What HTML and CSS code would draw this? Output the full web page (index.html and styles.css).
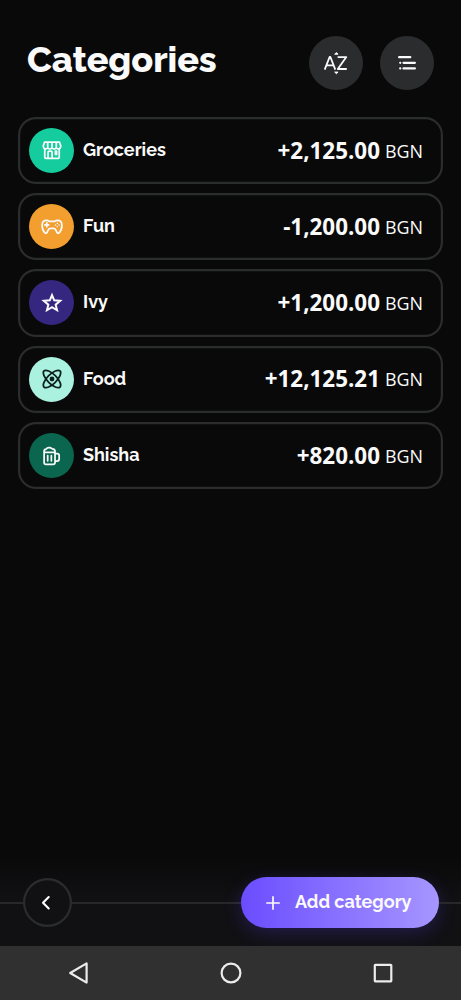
FILE: index.html
```html
<!DOCTYPE html>
<html lang="en">
<head>
<meta charset="utf-8">
<title>Categories</title>
<link rel="stylesheet" href="styles.css">
</head>
<body>
<div class="screen">
  <header class="header">
    <h1 class="title">Categories</h1>
    <button class="round-button" aria-label="Sort">
      <svg width="28" height="28" viewBox="0 0 28 28" fill="none" stroke="#fafafa" stroke-width="1.8" stroke-linejoin="round"><path d="M2.7 20.6 7.6 8h.8l4.9 12.6M4.4 16.4h7.2M15.6 8.1h8.7l-8.5 11.9h9"/><path d="m12.7 5.2 1.7-1.6 1.7 1.6zM12.7 23.1l1.7 1.6 1.7-1.6z" fill="#fafafa" stroke-width="1"/></svg>
    </button>
    <button class="round-button" aria-label="Reorder">
      <svg width="28" height="28" viewBox="0 0 28 28" fill="none" stroke="#fafafa" stroke-width="2.2" stroke-linecap="round"><path d="M6.1 8.2h11.2M10.5 13.8h11.4M10.5 19.4h11.4M7.2 13.8h.1M7.2 19.4h.1"/></svg>
    </button>
  </header>

  <main class="list">
    <article class="card">
      <span class="badge green"><svg class="icon" viewBox="0 0 24 24"><path d="M4.1 10.4V20a1.1 1.1 0 0 0 1.1 1.1h13.6a1.1 1.1 0 0 0 1.1-1.1v-9.6M3.9 3.3h16.2l1.4 4.2v1a2.5 2.5 0 0 1-4.8.8 2.5 2.5 0 0 1-4.7 0 2.5 2.5 0 0 1-4.7 0 2.5 2.5 0 0 1-4.8-.8v-1zM7.3 3.5v5.8M12 3.5v5.8M16.7 3.5v5.8M7.7 21v-6.4a1.4 1.4 0 0 1 1.4-1.4h1.6a1.4 1.4 0 0 1 1.4 1.4V21M15.7 13.3h1.3v3.6h-1.3z"/></svg></span>
      <span class="name">Groceries</span><span class="amount">+2,125.00</span><span class="currency">BGN</span>
    </article>
    <article class="card">
      <span class="badge orange"><svg class="icon" viewBox="0 0 24 24"><path d="M6.6 4.9c1.5 0 2 1 3.2 1h4.4c1.2 0 1.7-1 3.2-1h.6c3.6 0 4.8 3 4.8 5.3 0 3.4-1.2 6.4-3 8.1-.9.8-1.9.7-2.4-.4l-1.2-2.6c-.6-1.2-1.6-1.8-2.7-1.8h-3c-1.1 0-2.1.6-2.7 1.8l-1.2 2.6c-.5 1.1-1.5 1.2-2.4.4-1.8-1.7-3-4.7-3-8.1 0-2.3 1.2-5.3 4.8-5.3zM6.3 7.6v4.2M4.2 9.7h4.2"/><path d="M17.8 7.8h.1M17.8 11.6h.1M15.9 9.7h.1M19.7 9.7h.1" stroke-width="1.6"/></svg></span>
      <span class="name">Fun</span><span class="amount">-1,200.00</span><span class="currency">BGN</span>
    </article>
    <article class="card">
      <span class="badge indigo"><svg class="icon" viewBox="0 0 24 24"><path class="star" d="m12 3.4 2.4 5.7 6.5.5-4.9 4.2 1.5 6.1-5.5-3.3-5.5 3.3L8 13.8 3.1 9.6l6.5-.5z"/></svg></span>
      <span class="name">Ivy</span><span class="amount">+1,200.00</span><span class="currency">BGN</span>
    </article>
    <article class="card">
      <span class="badge mint"><svg class="icon" viewBox="0 0 24 24"><ellipse cx="12" cy="12" rx="12.4" ry="5.1" transform="rotate(45 12 12)"/><ellipse cx="12" cy="12" rx="12.4" ry="5.1" transform="rotate(-45 12 12)"/><circle class="core" cx="12" cy="12" r="1.7"/></svg></span>
      <span class="name">Food</span><span class="amount">+12,125.21</span><span class="currency">BGN</span>
    </article>
    <article class="card">
      <span class="badge forest"><svg class="icon" viewBox="0 0 24 24"><path d="M3.4 8h11.9v11.1a2 2 0 0 1-2 2H5.4a2 2 0 0 1-2-2zM3.4 8V6.9c0-1.4.8-2.3 2.2-2.4 1.3-2 4.6-2.3 6.4-.4 2 0 3.3 1 3.3 2.8V8M15.3 9.3h2.3a2.2 2.2 0 0 1 2.2 2.2v3.8a2.2 2.2 0 0 1-2.2 2.2h-2.3M7.3 11.5v5.7M11.3 11.5v5.7"/></svg></span>
      <span class="name">Shisha</span><span class="amount">+820.00</span><span class="currency">BGN</span>
    </article>
  </main>

  <footer class="actions">
    <span class="rail start"></span>
    <button class="back" aria-label="Back"><svg width="16" height="18" viewBox="0 0 16 18" fill="none" stroke="#fff" stroke-width="2.1" stroke-linecap="round" stroke-linejoin="round"><path d="m9.7 3-5.7 5.7 5.7 5.7"/></svg></button>
    <span class="rail middle"></span>
    <button class="add"><svg width="14" height="14" viewBox="0 0 14 14" stroke="#fafafa" stroke-width="1.7" stroke-linecap="round"><path d="M7 .9v12.2M.9 7h12.2"/></svg><span class="add-label">Add category</span></button>
    <span class="rail end"></span>
  </footer>

  <nav class="system">
    <svg width="24" height="24" viewBox="0 0 24 24"><path d="M19.6 2.4v19.2L3.2 12z"/></svg>
    <svg width="24" height="24" viewBox="0 0 24 24"><circle cx="12" cy="12" r="9.4"/></svg>
    <svg width="24" height="24" viewBox="0 0 24 24"><rect x="3.8" y="3.8" width="16.5" height="16.5" rx=".5"/></svg>
  </nav>
</div>
</body>
</html>
```
FILE: styles.css
```css
* { box-sizing: border-box; }
body { margin: 0; background: #090909; }
button { border: 0; padding: 0; flex: none; display: flex; align-items: center; justify-content: center; }
.screen { width: 461px; height: 1000px; display: flex; flex-direction: column; background: #090909; color: #fafafa; font-family: Raleway, Lato, sans-serif; overflow: hidden; }
.header { height: 116.7px; padding: 36px 26.9px 0 27px; display: flex; align-items: flex-start; gap: 17.6px; }
.title { margin: -1px auto 0 0; font-size: 36px; line-height: 48px; font-weight: 800; letter-spacing: -.08px; white-space: nowrap; }
.round-button { width: 54px; height: 54px; border-radius: 50%; background: #2b2c2e; }
.list { flex: 1; padding: 0 18px; display: flex; flex-direction: column; gap: 9px; }
.card { height: 67.3px; flex: none; box-shadow: inset 0 0 0 2.2px #2b2c2d; border-radius: 18px; padding: 0 20px 0 11px; display: flex; align-items: center; }
.badge { width: 45px; height: 45px; border-radius: 50%; display: flex; align-items: center; justify-content: center; color: #fafafa; }
.icon { width: 22px; height: 22px; fill: none; stroke: currentColor; stroke-width: 1.9; stroke-linecap: round; stroke-linejoin: round; }
.star { stroke-width: 2.2; stroke-linejoin: miter; }
.core { fill: currentColor; }
.green { background: #14cc9e; }
.orange { background: #f39f30; }
.indigo { background: #352680; }
.mint { background: #aaf2df; color: #0d2020; }
.forest { background: #0a664f; }
.name { margin: 0 auto 1.4px 9px; font-size: 18px; line-height: 24px; font-weight: 700; }
.amount { margin-top: .5px; font: 700 22.4px/30px "Open Sans", sans-serif; }
.currency { margin: .5px 0 0 5px; font: 400 17.9px/24px "Open Sans", sans-serif; }
.actions { height: 90px; padding-top: 21px; display: flex; align-items: flex-start; background: linear-gradient(#090909, #111114 50%); overflow: hidden; }
.rail { height: 2px; margin-top: 25px; background: #28282b; }
.start { width: 22.5px; }
.middle { flex: 1; }
.end { width: 22.5px; }
.back { width: 49px; height: 49px; margin-top: 1px; box-shadow: inset 0 0 0 2.2px #2b2c2d; border-radius: 50%; background: #111114; }
.add { width: 197.5px; height: 51px; padding-right: 2px; gap: 15px; border-radius: 26px; color: #fafafa; background: linear-gradient(90deg, #6b4dff, #a696ff); box-shadow: 0 5px 18px rgba(92, 61, 245, .24); }
.add-label { font: 700 18px/24px Raleway, Lato, sans-serif; margin-bottom: 2px; }
.system { height: 54px; padding: 0 66.5px; display: flex; align-items: center; justify-content: space-between; background: #303030; }
.system svg { fill: none; stroke: #ececec; stroke-width: 2.2; stroke-linejoin: round; }
```
